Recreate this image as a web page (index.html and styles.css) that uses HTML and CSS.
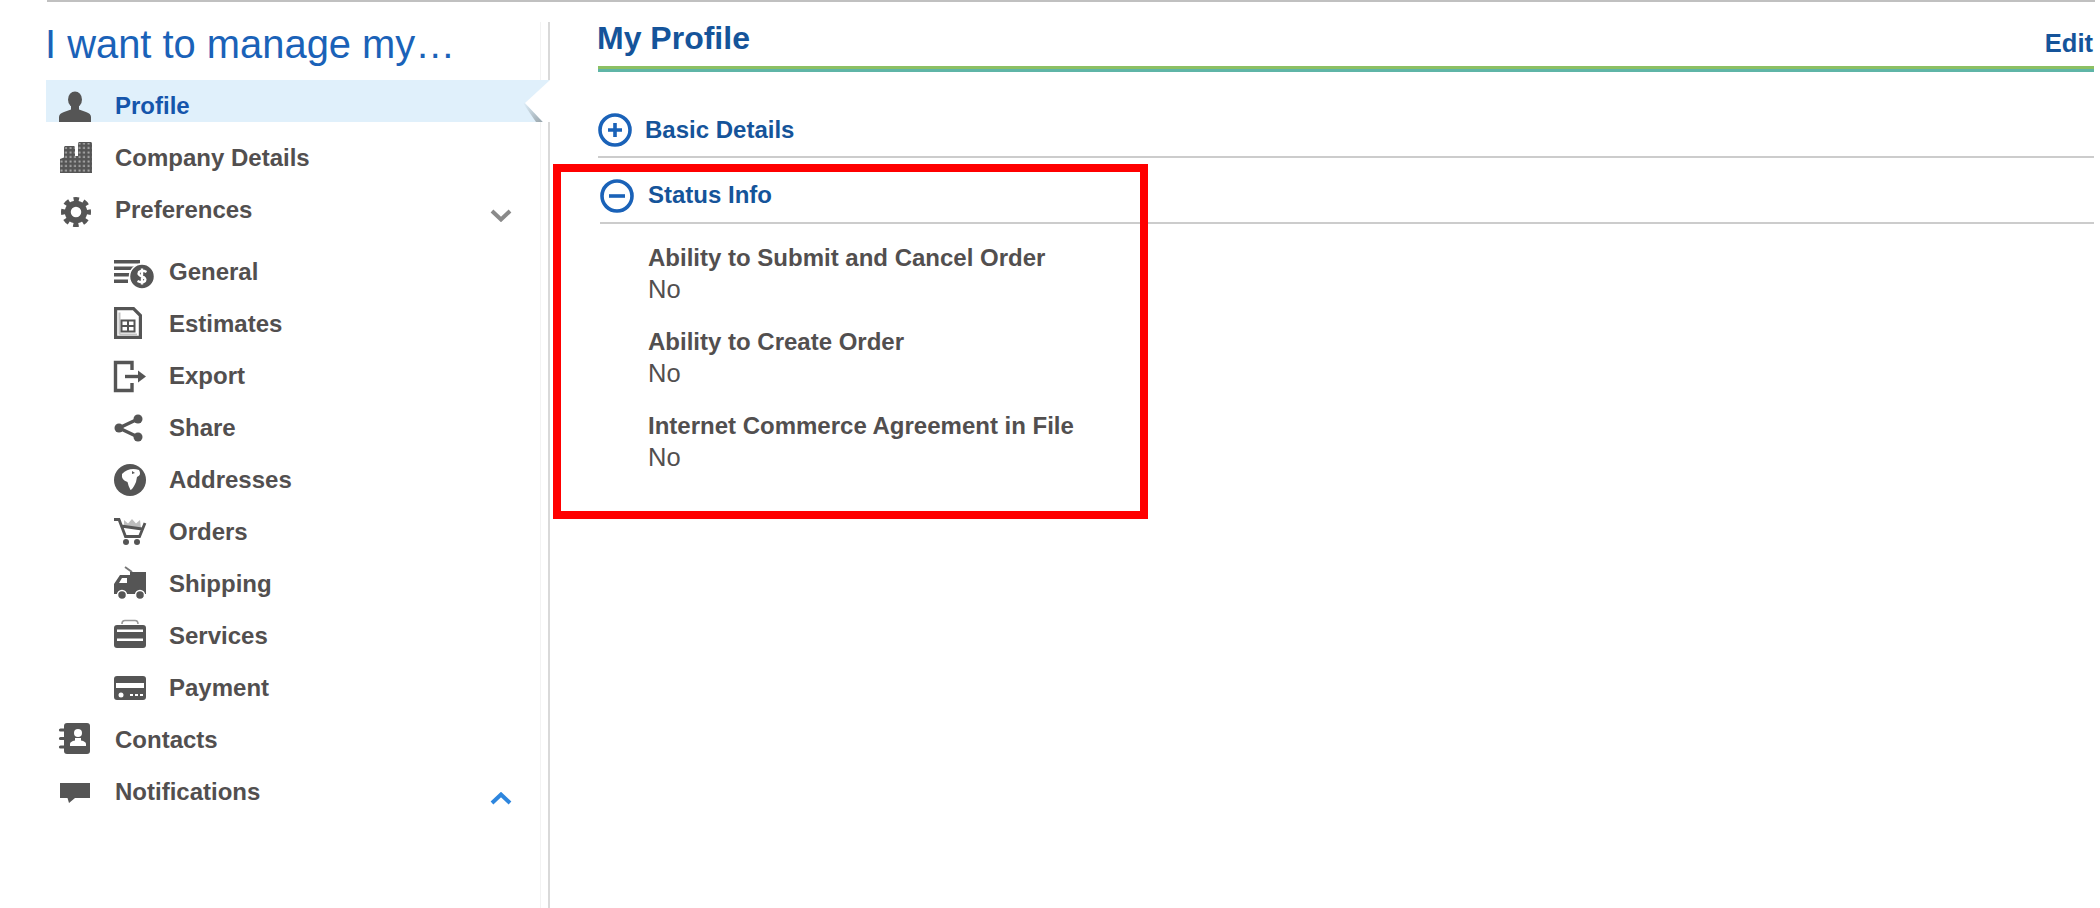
FILE: index.html
```html
<!DOCTYPE html>
<html lang="en">
<head>
<meta charset="utf-8">
<title>My Profile</title>
<link rel="stylesheet" href="styles.css">
</head>
<body>
<div class="topbar"></div>
<div class="page">
  <aside class="sidebar">
    <div class="sidebar-inner">
      <h2 class="manage-title">I want to manage my…</h2>
      <nav>
        <a class="nav-row active">
          <svg class="icon" viewBox="0 0 34 34"><ellipse cx="16" cy="10.5" rx="7" ry="8"/><path d="M0 33V28Q0 24.500 5 23L12 20.500V16H20V20.500L27 23Q32 24.500 32 28V33Z"/></svg>
          <span class="label">Profile</span>
          <svg class="notch" viewBox="0 0 25 42"><defs><linearGradient id="sh" x1="0" y1="0" x2="1" y2="1"><stop offset="0" stop-color="#e0f0fb"/><stop offset="1" stop-color="#98a4aa"/></linearGradient></defs><polygon class="notch-shadow" points="0,23 18,42 11,42 -2,23"/><polygon class="notch-cut" points="25,0 0,23 18,42 25,42"/></svg>
        </a>
        <a class="nav-row">
          <svg class="icon" viewBox="0 0 34 34"><defs><pattern id="win" x="0" y="0" width="4.500" height="4.500" patternUnits="userSpaceOnUse"><rect x="1.500" y="1.500" width="2" height="2" fill="#a9a9a9"/></pattern></defs><path d="M1 32V18L5 16.500V6L6 5H15L16 6V15H19V2L20 1H32L33 2V32Z"/><path class="windows" d="M1 32V18L5 16.500V6H16V15H19V2H33V32Z"/></svg>
          <span class="label">Company Details</span>
        </a>
        <a class="nav-row">
          <svg class="icon" viewBox="0 0 34 34"><circle class="ring" cx="17" cy="19" r="8.250"/><circle class="teeth" cx="17" cy="19" r="12.500"/></svg>
          <span class="label">Preferences</span>
          <svg class="chevron chevron-down" viewBox="0 0 22 13"><path d="M2 2L11 10.500L20 2"/></svg>
        </a>
        <div class="sub-list">
          <a class="nav-row sub">
            <svg class="icon" viewBox="0 0 44 34"><rect x="1" y="5" width="26" height="3.500"/><rect x="1" y="11.500" width="21" height="3.500"/><rect x="1" y="18" width="18" height="3.500"/><rect x="1" y="24.500" width="14" height="3.500"/><circle class="coin" cx="29" cy="21.500" r="12.500"/><path class="dollar" d="M33.500 17Q29 14.500 26 17Q24.500 20 29 21.500Q33.500 23 32 26Q29 28.500 24.500 26M29 13.500V29.500"/></svg>
            <span class="label">General</span>
          </a>
          <a class="nav-row sub">
            <svg class="icon" viewBox="0 0 44 34"><path class="outline" d="M2.600 1.600H20.500L27.400 8.500V30.400H2.600Z"/><path class="outline-light" d="M6.500 27.500H24M6.500 27.500V5.500"/><rect class="outline-table" x="8.500" y="13.500" width="13" height="11"/><path class="outline-table" d="M15 13.500V24.500M8.500 19H21.500"/></svg>
            <span class="label">Estimates</span>
          </a>
          <a class="nav-row sub">
            <svg class="icon" viewBox="0 0 44 34"><path class="outline-heavy" d="M19 11V3.500H2.500V31.500H19V24"/><path class="outline-heavy" d="M12 17.500H27"/><polygon points="25,11.500 33,17.500 25,23.500"/></svg>
            <span class="label">Export</span>
          </a>
          <a class="nav-row sub">
            <svg class="icon" viewBox="0 0 44 34"><path class="outline-heavy" d="M25 8L6 17L25 26"/><circle cx="25" cy="8" r="4.500"/><circle cx="25" cy="26" r="4.500"/><circle cx="6" cy="17" r="4.500"/></svg>
            <span class="label">Share</span>
          </a>
          <a class="nav-row sub">
            <svg class="icon" viewBox="0 0 44 34"><circle cx="17" cy="17" r="16"/><path class="land" d="M9 11Q16 4 26 7Q29 12 24 14L23 19Q20 26 17.500 27Q15 22 14.500 19Q8 17 9 11Z"/><path d="M19 8L22 10L19 11Z"/></svg>
            <span class="label">Addresses</span>
          </a>
          <a class="nav-row sub">
            <svg class="icon" viewBox="0 0 44 34"><polygon class="goods" points="11,13 11,5 15,8.500 19,4 23,8.500 27,5 28,13"/><path class="outline-mid" d="M1 4.500H6L12.500 21.500H26.500L32 8M8 11L29 14"/><circle cx="13" cy="27" r="3"/><circle cx="24" cy="27" r="3"/></svg>
            <span class="label">Orders</span>
          </a>
          <a class="nav-row sub">
            <svg class="icon" viewBox="0 0 44 34"><path class="outline-antenna" d="M12 0L19 5"/><path d="M17 5H33V27H1V17L7 8H17Z"/><path class="land" d="M9 11H14V16H6Z"/><circle class="wheel" cx="9" cy="28" r="4.500"/><circle class="wheel" cx="27" cy="28" r="4.500"/></svg>
            <span class="label">Shipping</span>
          </a>
          <a class="nav-row sub">
            <svg class="icon" viewBox="0 0 44 34"><path class="handle" d="M9 5Q9 1.500 12 1.500H22Q25 1.500 25 5"/><rect x="1" y="6" width="32" height="23" rx="3"/><rect class="land" x="4" y="10.500" width="26" height="2.500"/><rect class="land" x="4" y="19.500" width="26" height="2.500"/></svg>
            <span class="label">Services</span>
          </a>
          <a class="nav-row sub">
            <svg class="icon" viewBox="0 0 44 34"><rect x="1" y="5" width="32" height="24" rx="3"/><rect class="land" x="3" y="12" width="28" height="5"/><circle class="land" cx="8" cy="24" r="2.500"/><rect class="land" x="17" y="23" width="3" height="2"/><rect class="land" x="22" y="23" width="3" height="2"/><rect class="land" x="27" y="23" width="3" height="2"/></svg>
            <span class="label">Payment</span>
          </a>
        </div>
        <a class="nav-row">
          <svg class="icon" viewBox="0 0 34 34"><rect x="5" y="0" width="26" height="31" rx="3"/><path class="rings" d="M1.500 7H6.500M1.500 15.500H6.500M1.500 24H6.500"/><circle class="land" cx="19" cy="10" r="4"/><path class="land" d="M11 23V21Q11 18.500 16 17.500V15H22V17.500Q27 18.500 27 21V23Z"/></svg>
          <span class="label">Contacts</span>
        </a>
        <a class="nav-row">
          <svg class="icon" viewBox="0 0 34 34"><path d="M1 8H31V23H16L10 28L8.500 23H1Z"/></svg>
          <span class="label">Notifications</span>
          <svg class="chevron chevron-up" viewBox="0 0 22 13"><path d="M2 11L11 2.500L20 11"/></svg>
        </a>
      </nav>
    </div>
  </aside>
  <main class="content">
    <header class="content-head">
      <h1 class="content-title">My Profile</h1>
      <a class="edit-link">Edit</a>
    </header>
    <div class="green-rule"></div>
    <section class="section section-basic">
      <svg class="toggle" viewBox="0 0 34 34"><circle cx="17" cy="17" r="15"/><path d="M17 10V24M10 17H24"/></svg>
      <h3 class="section-title">Basic Details</h3>
    </section>
    <section class="section section-status">
      <svg class="toggle" viewBox="0 0 34 34"><circle cx="17" cy="17" r="15"/><path d="M9 17H25"/></svg>
      <h3 class="section-title">Status Info</h3>
    </section>
    <dl class="details">
      <div class="detail">
        <dt>Ability to Submit and Cancel Order</dt>
        <dd>No</dd>
      </div>
      <div class="detail">
        <dt>Ability to Create Order</dt>
        <dd>No</dd>
      </div>
      <div class="detail">
        <dt>Internet Commerce Agreement in File</dt>
        <dd>No</dd>
      </div>
    </dl>
  </main>
</div>
<div class="annotation"></div>
</body>
</html>
```
FILE: styles.css
```css
* { box-sizing: border-box; }
html, body { margin: 0; padding: 0; height: 100%; overflow: hidden; background: #fff; }
body { font-family: "Liberation Sans", Arial, sans-serif; color: #524f4f; position: relative; }

.topbar { height: 2px; margin: 0 5px 0 47px; background: #c0c0c0; }
.page { display: flex; height: 906px; padding-top: 20px; }

/* Sidebar */
.sidebar { flex: none; width: 504px; margin-left: 46px; padding-right: 7px; border-right: 2px solid #d9d9d9; }
.sidebar-inner { height: 100%; border-right: 1px solid #f2f2f2; }
.manage-title { margin: 0 0 14px -1px; font-size: 39.9px; line-height: 44px; font-weight: 400; color: #1a62b8; white-space: nowrap; }

.nav-row { display: flex; align-items: flex-start; height: 42px; margin-bottom: 10px; padding-left: 13px; font-size: 24px; font-weight: 700; line-height: 42px; color: #524f4f; }
.nav-row .label { padding-top: 5px; margin-left: 22px; }
.nav-row.sub { padding-left: 67px; }
.nav-row.sub .label { margin-left: 12px; }
.nav-row.active { position: relative; z-index: 1; margin-right: -10px; background: #e0f0fb; }
.nav-row.active .label { color: #1555ab; }
.sub-list { padding-top: 10px; }

.icon { flex: none; display: block; width: 34px; height: 34px; margin-top: 9px; fill: #555; overflow: visible; }
.sub .icon { width: 44px; }
.icon .windows { fill: url(#win); }
.icon .land { fill: #fff; }
.icon .ring { fill: none; stroke: #555; stroke-width: 6; }
.icon .teeth { fill: none; stroke: #555; stroke-width: 5; stroke-dasharray: 5.3 4.5; stroke-dashoffset: 2.65; }
.icon .coin { stroke: #fff; stroke-width: 1.5; }
.icon .dollar { fill: none; stroke: #fff; stroke-width: 2.4; }
.icon .outline { fill: none; stroke: #555; stroke-width: 3.2; }
.icon .outline-light { fill: none; stroke: #c4c4c4; stroke-width: 2; }
.icon .outline-table { fill: none; stroke: #555; stroke-width: 2; }
.icon .outline-antenna { fill: none; stroke: #777; stroke-width: 2; }
.icon .outline-mid { fill: none; stroke: #555; stroke-width: 2.8; }
.icon .outline-heavy { fill: none; stroke: #555; stroke-width: 3.4; }
.icon .goods { fill: #bdbdbd; }
.icon .wheel { stroke: #fff; stroke-width: 1.5; }
.icon .handle { fill: none; stroke: #999; stroke-width: 1.6; }
.icon .rings { fill: none; stroke: #555; stroke-width: 3.2; stroke-linecap: round; }

.notch { position: absolute; right: 0; top: 0; width: 25px; height: 42px; overflow: visible; }
.notch-cut { fill: #fff; }
.notch-shadow { fill: url(#sh); }

.chevron { flex: none; width: 22px; height: 13px; margin-left: auto; fill: none; stroke-width: 4; }
.chevron-down { margin-top: 25px; margin-right: 28px; stroke: #8a8a8a; }
.chevron-up { margin-top: 26px; margin-right: 28px; stroke: #2e86de; }

/* Content */
.content { flex: 1; min-width: 0; padding: 0 6px 0 48px; }
.content-head { display: flex; justify-content: space-between; align-items: flex-start; height: 44px; }
.content-title { margin: 0 0 0 -1px; font-size: 32px; line-height: 32px; font-weight: 700; color: #15549a; }
.edit-link { margin-right: 1px; font-size: 25.5px; line-height: 43px; font-weight: 700; color: #15549a; }
.green-rule { height: 6px; background: linear-gradient(#8cc063 50%, #5fb5a7 50%); }

.section { display: flex; align-items: flex-start; height: 44px; border-bottom: 2px solid #ccc; }
.section-basic { margin-top: 42px; gap: 13px; }
.section-status { margin-top: 22px; margin-left: 2px; gap: 14px; }
.section-title { margin: 0; font-size: 24px; line-height: 30px; font-weight: 700; color: #15549a; }
.section-basic .section-title { line-height: 32px; }
.toggle { flex: none; display: block; width: 34px; height: 34px; margin-top: -1px; fill: none; stroke: #1a62b8; stroke-width: 3.6; }

.details { margin: 19px 0 0 50px; }
.detail { margin-bottom: 22.2px; }
.detail dt { font-size: 24px; line-height: 30px; font-weight: 700; }
.detail dd { margin: 0; font-size: 25.5px; line-height: 32px; }

/* Red review box over the page */
.annotation { position: absolute; left: 553px; top: 164px; width: 595px; height: 355px; border: 8px solid #f00; pointer-events: none; }
```
